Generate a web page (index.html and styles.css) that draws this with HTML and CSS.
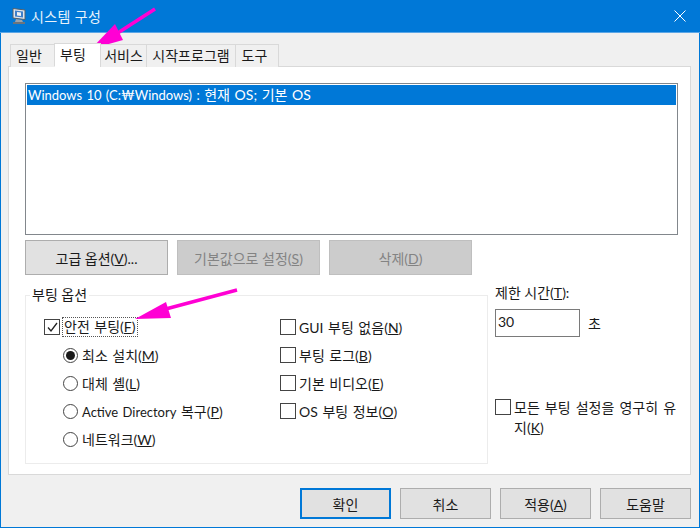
FILE: index.html
```html
<!DOCTYPE html>
<html lang="ko">
<head>
<meta charset="utf-8">
<title>시스템 구성</title>
<link rel="stylesheet" href="styles.css">
</head>
<body>
<div class="window">
  <header class="titlebar">
    <svg class="app-icon" width="18" height="18" viewBox="0 0 18 18">
      <path d="M3 1.5L15 3v9.5L3 11z" fill="#dfe6ee" stroke="#55606a"/>
      <path d="M5 3.5l8 1v6l-8-1z" fill="#3f7fc9"/>
      <path d="M7 5l4 .5v3.5l-4-.5z" fill="#f2f2f2"/>
      <path d="M6 12l6 1 1 2H5z" fill="#9aa4ae"/>
      <rect x="3" y="15" width="12" height="2" fill="#6b747d"/>
    </svg>
    <span class="title">시스템 구성</span>
    <svg class="close" width="12" height="12" viewBox="0 0 12 12"><path d="M.5.5l11 11M11.5.5l-11 11" stroke="#fff" fill="none"/></svg>
  </header>
  <main class="content">
    <nav class="tabs">
      <span class="tab tab-first">일반</span>
      <span class="tab active">부팅</span>
      <span class="tab">서비스</span>
      <span class="tab">시작프로그램</span>
      <span class="tab">도구</span>
    </nav>
    <section class="panel">
      <div class="listbox"><div class="list-item"><span class="latin">Windows 10 (C:₩Windows) :</span> 현재 OS; 기본 OS</div></div>
      <div class="actions">
        <button class="btn">고급 옵션(<u>V</u>)...</button>
        <button class="btn disabled">기본값으로 설정(<u>S</u>)</button>
        <button class="btn disabled">삭제(<u>D</u>)</button>
      </div>
      <div class="lower">
        <fieldset class="group">
          <legend>부팅 옵션</legend>
          <div class="group-columns">
            <div class="col">
              <label class="row"><span class="check checked"><svg width="13" height="13" viewBox="0 0 13 13"><path d="M2 6.5l3 3.5 6-8" fill="none" stroke="#222" stroke-width="1.3"/></svg></span><span class="focus-label">안전 부팅(<u>F</u>)</span></label>
              <label class="row sub"><span class="radio on"></span>최소 설치(<u>M</u>)</label>
              <label class="row sub"><span class="radio"></span>대체 셸(<u>L</u>)</label>
              <label class="row sub"><span class="radio"></span><span><span class="latin">Active Directory</span> 복구(<u>P</u>)</span></label>
              <label class="row sub"><span class="radio"></span>네트워크(<u>W</u>)</label>
            </div>
            <div class="col">
              <label class="row"><span class="check"></span>GUI 부팅 없음(<u>N</u>)</label>
              <label class="row"><span class="check"></span>부팅 로그(<u>B</u>)</label>
              <label class="row"><span class="check"></span>기본 비디오(<u>E</u>)</label>
              <label class="row"><span class="check"></span>OS 부팅 정보(<u>O</u>)</label>
            </div>
          </div>
        </fieldset>
        <div class="side">
          <div class="timeout-label">제한 시간(<u>T</u>):</div>
          <div class="timeout"><span class="input">30</span><span>초</span></div>
          <label class="persist"><span class="check"></span><span class="persist-text">모든 부팅 설정을 영구히 유지(<u>K</u>)</span></label>
        </div>
      </div>
    </section>
    <footer class="footer">
      <button class="btn foot default">확인</button>
      <button class="btn foot">취소</button>
      <button class="btn foot">적용(<u>A</u>)</button>
      <button class="btn foot">도움말</button>
    </footer>
  </main>
  <svg class="arrows" width="700" height="528" viewBox="0 0 700 528">
    <path d="M155 9L113 36" stroke="#ff00d4" stroke-width="3.5" fill="none"/>
    <path d="M91 49L115 24L123 40z" fill="#ff00d4"/>
    <path d="M237 290L162 310" stroke="#ff00d4" stroke-width="3.5" fill="none"/>
    <path d="M135 319L166 302L171 318z" fill="#ff00d4"/>
  </svg>
</div>
</body>
</html>
```
FILE: styles.css
```css
* { box-sizing: border-box; }
html, body { margin: 0; padding: 0; }
body { width: 700px; height: 528px; overflow: hidden; font-family: "Lato", "Noto Sans CJK KR", sans-serif; font-size: 14px; color: #1a1a1a; }
.window { position: relative; width: 700px; height: 528px; display: flex; flex-direction: column; border: 1px solid #0078d7; border-top: 0; background: #f0f0f0; }
.titlebar { height: 33px; flex: none; background: #0078d7; display: flex; align-items: center; padding: 0 13px 0 9px; color: #fff; margin: 0 -1px; border-bottom: 1px solid #5ba6e6; }
.app-icon { flex: none; margin-left: 1px; }
.title { font-size: 14px; margin-left: 3px; color: #e8f2fb; letter-spacing: .4px; }
.close { margin-left: auto; margin-right: 1px; }
.content { flex: 1; display: flex; flex-direction: column; padding: 10px 8px 8px 7px; min-height: 0; }
.tabs { display: flex; height: 24px; align-items: flex-end; flex: none; position: relative; z-index: 1; margin-bottom: -1px; padding-left: 2px; }
.tab { height: 23px; display: flex; align-items: center; justify-content: center; padding: 0 0 2px; background: #f0f0f0; border: 1px solid #d9d9d9; border-bottom: 0; margin-left: -1px; white-space: nowrap; }
.tab-first { width: 45px; margin-left: 0; padding-right: 7px; }
.tab.active { height: 24px; width: 47px; padding-right: 9px; background: #fff; border-bottom: 1px solid #fff; }
.tab:nth-child(3) { width: 47px; }
.tab:nth-child(4) { width: 90px; }
.tab:nth-child(5) { width: 44px; padding-right: 5px; }
.panel { height: 409px; flex: none; background: #fff; border: 1px solid #d9d9d9; padding: 16px 12px 0 16px; }
.listbox { height: 152px; border: 1px solid #82878c; padding: 1px; }
.list-item { height: 20px; line-height: 20px; background: #0078d7; color: #fff; padding-left: 1px; white-space: nowrap; word-spacing: 1px; }
.latin { font-size: 13px; }
.actions { display: flex; gap: 9px; margin-top: 5px; }
.btn { font: inherit; color: #1a1a1a; background: #e1e1e1; border: 1px solid #adadad; width: 143px; height: 35px; padding: 0; }
.btn.disabled { background: #cccccc; border-color: #bfbfbf; color: #838383; }
.lower { display: flex; margin-top: 10px; }
.group { width: 463px; height: 179px; flex: none; margin: 0; padding: 0; border: 2px solid #ececec; border-width: 1px 1.5px 1.5px 1.5px; }
.group legend { padding: 0 2px; margin-left: 4px; line-height: 20px; }
.group-columns { display: flex; padding-top: 8px; }
.col { display: flex; flex-direction: column; }
.col:first-child { width: 254px; padding-left: 18px; }
.row { height: 28px; display: flex; align-items: center; white-space: nowrap; word-spacing: 1px; }
.row.sub { padding-left: 19px; }
.check { width: 16px; height: 16px; flex: none; border: 1px solid #444; background: #fff; margin-right: 3px; display: flex; align-items: center; justify-content: center; }
.focus-label { border: 1px dotted #555; padding: 0 1px; height: 20px; line-height: 17px; margin-left: -1px; white-space: nowrap; }
.radio { width: 15px; height: 15px; flex: none; border: 1px solid #444; border-radius: 50%; background: #fff; margin-right: 4px; }
.radio.on::after { content: ""; display: block; width: 9px; height: 9px; margin: 2px; border-radius: 50%; background: #1a1a1a; }
.side { margin-left: 7px; width: 184px; display: flex; flex-direction: column; }
.timeout-label { height: 20px; line-height: 20px; margin-top: -2px; }
.timeout { display: flex; align-items: center; gap: 8px; margin-top: 6px; }
.input { width: 85px; height: 28px; border: 1px solid #7a7a7a; padding-left: 2px; line-height: 24px; }
.persist { display: flex; align-items: flex-start; margin-top: 61px; line-height: 20px; }
.persist .check { margin-top: 1px; }
.persist-text { word-break: break-all; word-spacing: 1.5px; }
.footer { display: flex; justify-content: flex-end; gap: 9px; margin-top: 13px; }
.btn.foot { width: 91px; height: 31px; }
.btn.foot.default { border: 2px solid #0078d7; }
.arrows { position: absolute; left: -1px; top: 0; pointer-events: none; }
```
